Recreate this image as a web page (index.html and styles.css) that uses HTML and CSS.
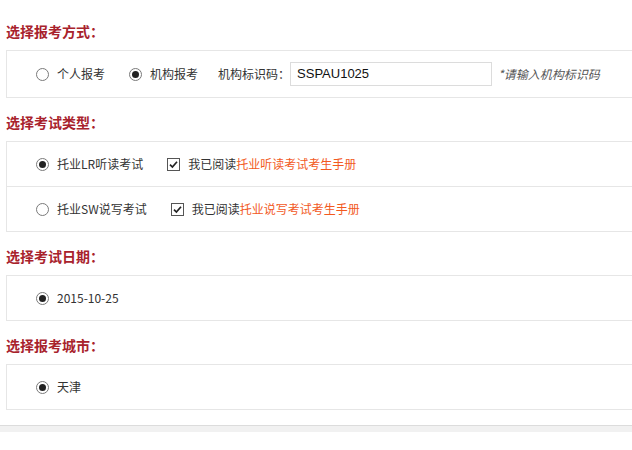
FILE: index.html
```html
<!DOCTYPE html>
<html lang="zh-CN">
<head>
<meta charset="utf-8">
<title>报考</title>
<link rel="stylesheet" href="styles.css">
</head>
<body>
<div class="page">
  <h3 class="title first">选择报考方式：</h3>
  <div class="box">
    <div class="row tall">
      <span class="opt"><span class="radio"></span><span>个人报考</span></span>
      <span class="opt"><span class="radio on"></span><span>机构报考</span></span>
      <span class="label">机构标识码：</span>
      <span class="input">SSPAU1025</span>
      <span class="hint">*请输入机构标识码</span>
    </div>
  </div>

  <h3 class="title">选择考试类型：</h3>
  <div class="box">
    <div class="row">
      <span class="opt"><span class="radio on"></span><span>托业LR听读考试</span></span>
      <span class="opt"><span class="check"><svg width="13" height="13" viewBox="0 0 13 13"><rect x="0.5" y="0.5" width="12" height="12" fill="#fff" stroke="#555"/><path d="M3 6.6 L5.4 9 L10 3.8" fill="none" stroke="#222" stroke-width="1.7"/></svg></span><span>我已阅读<span class="link">托业听读考试考生手册</span></span></span>
    </div>
    <div class="row sep">
      <span class="opt"><span class="radio"></span><span>托业SW说写考试</span></span>
      <span class="opt"><span class="check"><svg width="13" height="13" viewBox="0 0 13 13"><rect x="0.5" y="0.5" width="12" height="12" fill="#fff" stroke="#555"/><path d="M3 6.6 L5.4 9 L10 3.8" fill="none" stroke="#222" stroke-width="1.7"/></svg></span><span>我已阅读<span class="link">托业说写考试考生手册</span></span></span>
    </div>
  </div>

  <h3 class="title">选择考试日期：</h3>
  <div class="box">
    <div class="row">
      <span class="opt"><span class="radio on"></span><span>2015-10-25</span></span>
    </div>
  </div>

  <h3 class="title">选择报考城市：</h3>
  <div class="box">
    <div class="row">
      <span class="opt"><span class="radio on"></span><span>天津</span></span>
    </div>
  </div>
</div>
<div class="footer-line"></div>
</body>
</html>
```

FILE: styles.css
```css
html, body {
  margin: 0;
  padding: 0;
  background: #fff;
  overflow: hidden;
}
body {
  font-family: "Noto Sans CJK SC", "Microsoft YaHei", sans-serif;
  font-size: 12px;
  color: #333;
  width: 632px;
  height: 450px;
}
.page {
  padding-left: 6px;
}
.title {
  margin: 0;
  padding: 15px 0 10px 0;
  height: 18px;
  line-height: 18px;
  font-size: 14px;
  font-weight: bold;
  color: #a8222c;
}
.title.first {
  padding-top: 22px;
}
.box {
  border: 1px solid #e6e6e6;
  border-right: none;
}
.row {
  height: 44px;
  display: flex;
  align-items: center;
  padding-left: 29px;
  line-height: 16px;
}
.row.tall {
  height: 46px;
}
.row.sep {
  border-top: 1px solid #e6e6e6;
}
.opt {
  display: flex;
  align-items: center;
  margin-right: 24px;
}
.radio {
  width: 11px;
  height: 11px;
  border: 1px solid #7a7a7a;
  border-radius: 50%;
  background: #fff;
  margin-right: 8px;
  position: relative;
  flex: none;
}
.radio.on::after {
  content: "";
  position: absolute;
  left: 2px;
  top: 2px;
  width: 7px;
  height: 7px;
  border-radius: 50%;
  background: #222;
}
.check {
  display: flex;
  margin-right: 8px;
}
.link {
  color: #f25a1e;
}
.label {
  margin-left: -4px;
  margin-right: 0;
}
.input {
  width: 194px;
  height: 22px;
  border: 1px solid #dcdcdc;
  padding-left: 6px;
  display: flex;
  align-items: center;
  font-family: "Liberation Sans", Arial, sans-serif;
  font-size: 13px;
  color: #111;
  margin-right: 6px;
}
.hint {
  font-style: italic;
  color: #555;
}
.footer-line {
  margin-top: 15px;
  border-top: 1px solid #dcdcdc;
  height: 6px;
  background: #f1f1f1;
}
```
